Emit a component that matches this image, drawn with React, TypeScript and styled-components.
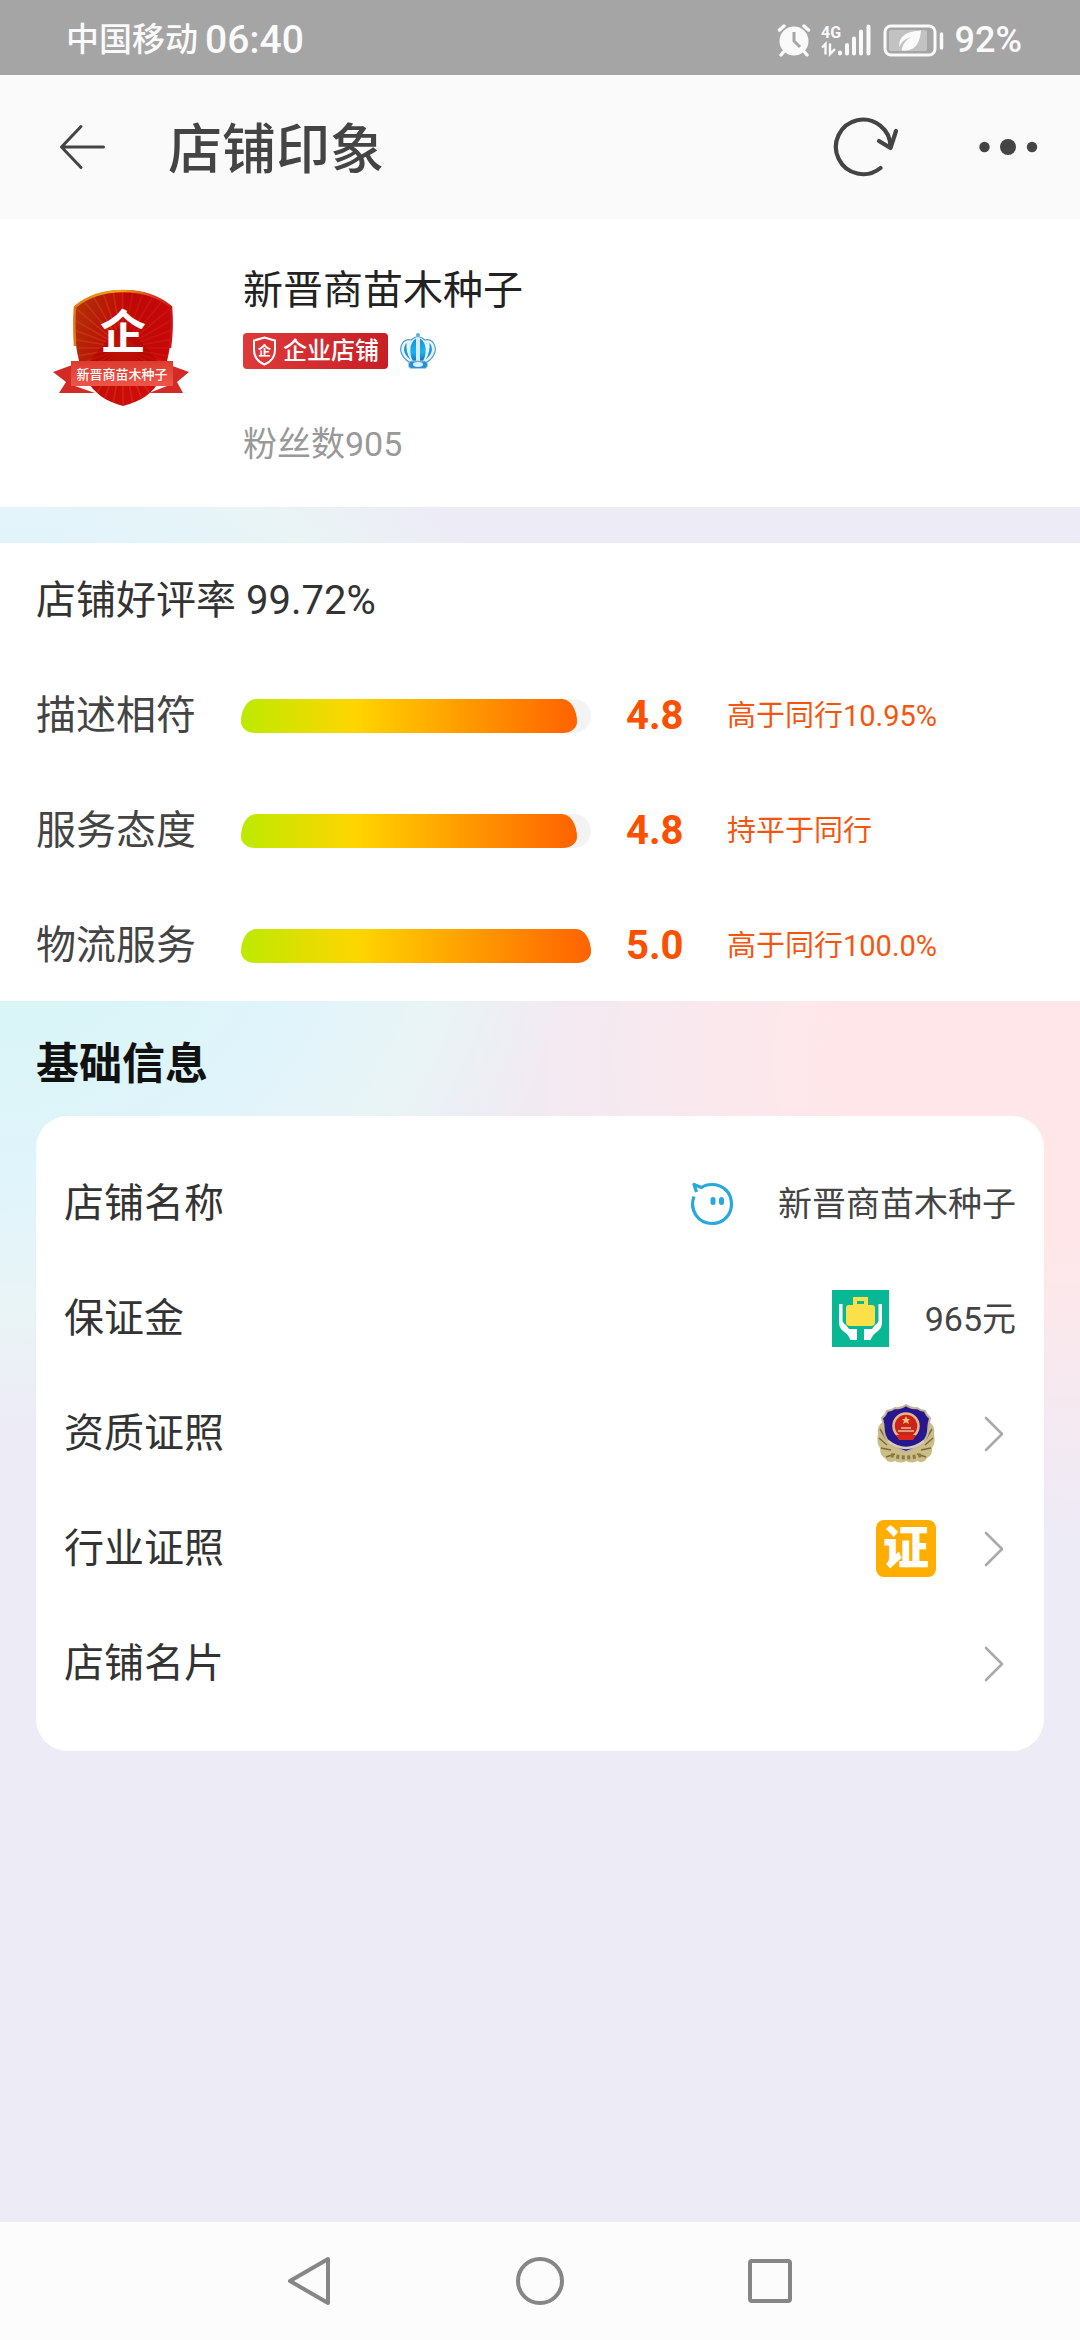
import React from 'react';
import styled, { createGlobalStyle } from 'styled-components';

const GlobalStyle = createGlobalStyle`
  *, *::before, *::after { box-sizing: border-box; }
  body {
    margin: 0;
    font-family: Roboto, "Noto Sans CJK SC", sans-serif;
    color: #333;
  }
  button {
    margin: 0;
    padding: 0;
    border: 0;
    background: none;
    font: inherit;
    color: inherit;
    text-align: left;
    cursor: pointer;
  }
  h1, h2, p { margin: 0; }
  svg { display: block; flex: none; }
`;

const Page = styled.div`
  min-height: 100vh;
  display: flex;
  flex-direction: column;
  background:
    radial-gradient(ellipse 580px 560px at 0 870px,
      #d3f6f2 0, #d9f5f6 25%, #e0f4fb 55%, #e4f4f9 66%, #e9f4f5 78%, rgba(235, 238, 245, 0) 100%),
    radial-gradient(ellipse 660px 480px at 100% 1060px,
      #ffe7e9 0, #ffe7e9 38%, rgba(255, 232, 234, 0) 100%),
    #edebf6;
`;

const StatusBar = styled.div`
  height: 75px;
  padding: 4px 58px 0 66px;
  display: flex;
  align-items: center;
  justify-content: space-between;
  background: #a5a5a5;
  color: #fafafa;
`;

const StatusGroup = styled.div<{ $gap: number }>`
  display: flex;
  align-items: center;
  gap: ${(p) => p.$gap}px;
`;

const StatusText = styled.span<{ $size: number }>`
  font-size: ${(p) => p.$size}px;
  line-height: 48px;
  font-weight: 500;
`;

const Header = styled.header`
  height: 144px;
  padding: 0 42px 0 56px;
  display: flex;
  align-items: center;
  background: #fafafa;
  color: #444;
`;

const Title = styled.h1`
  flex: 1;
  margin-left: 58px;
  padding-top: 8px;
  font-size: 54px;
  line-height: 72px;
  font-weight: 500;
`;

const HeaderActions = styled.div`
  display: flex;
  align-items: center;
  gap: 79px;
`;

const ShopCard = styled.section`
  display: flex;
  gap: 48px;
  padding: 42px 36px 38px 51px;
  background: #fff;
`;

const LogoBox = styled.div`
  padding-top: 15px;
`;

const ShopName = styled.h2`
  font-size: 40px;
  line-height: 60px;
  font-weight: 400;
  color: #222;
`;

const BadgeRow = styled.div`
  margin-top: 11px;
  display: flex;
  align-items: center;
  gap: 11px;
`;

const EnterpriseBadge = styled.span`
  height: 36px;
  padding: 0 9px;
  display: flex;
  align-items: center;
  gap: 6px;
  border-radius: 4px;
  background: linear-gradient(90deg, #df3a3a, #c81e25);
  color: #fff;
  font-size: 24px;
  line-height: 36px;
  font-weight: 500;
`;

const Fans = styled.p`
  margin-top: 49px;
  font-size: 34px;
  line-height: 50px;
  color: #999;
`;

const Scores = styled.section`
  margin-top: 36px;
  padding: 29px 36px 26px;
  display: flex;
  flex-direction: column;
  gap: 57px;
  background: #fff;
`;

const ScoreLine = styled.div`
  display: grid;
  grid-template-columns: 205px 350px 58px 1fr;
  align-items: center;
  font-size: 40px;
  line-height: 58px;
`;

const Rate = styled.p`
  font-size: 40px;
  line-height: 58px;
`;

const ScoreName = styled.span`
  color: #444;
`;

const Track = styled.div`
  height: 34px;
  border-radius: 17px;
  background: #f3f3f3;
`;

const Fill = styled.div`
  height: 100%;
  border-radius: 15px 15px 14px 14px / 23px 23px 11px 11px;
  background: linear-gradient(90deg, #bdea00 0, #ffd500 34%, #ff9c00 66%, #ff6200 100%);
`;

const ScoreValue = styled.span`
  margin-left: 35px;
  font-weight: 700;
  color: #fa5000;
`;

const ScoreNote = styled.span`
  margin-left: 78px;
  font-size: 29px;
  color: #f65510;
`;

const InfoHeading = styled.h2`
  padding: 33px 36px 22px;
  font-size: 43px;
  line-height: 60px;
  font-weight: 700;
  color: #111;
`;

const InfoCard = styled.div`
  margin: 0 36px 40px;
  padding: 30px 28px;
  border-radius: 32px;
  background: #fff;
`;

const InfoRow = styled.div`
  width: 100%;
  height: 115px;
  display: flex;
  align-items: center;
  justify-content: space-between;
  font-size: 40px;
  line-height: 58px;
`;

const InfoEnd = styled.span<{ $gap: number; $inset?: number }>`
  display: flex;
  align-items: center;
  gap: ${(p) => p.$gap}px;
  padding-right: ${(p) => p.$inset ?? 0}px;
  font-size: 34px;
  color: #444;
`;

const CertIcon = styled.span`
  width: 60px;
  height: 57px;
  display: flex;
  align-items: center;
  justify-content: center;
  border-radius: 8px;
  background: #ffae00;
  color: #fff;
  font-size: 46px;
  line-height: 57px;
  font-weight: 900;
`;

const SystemNav = styled.nav`
  height: 118px;
  margin-top: auto;
  display: flex;
  align-items: center;
  justify-content: center;
  gap: 181px;
  background: #fcfcfc;
`;

const AlarmIcon = () => (
  <svg width="34" height="34" viewBox="0 0 34 34" aria-hidden="true">
    <circle cx="17" cy="18" r="14.5" fill="#fafafa" />
    <path d="M2.5 7 L7 3 M31.5 7 L27 3 M6.5 29 L4 32 M27.5 29 L30 32" stroke="#fafafa" strokeWidth="3.4" strokeLinecap="round" />
    <path d="M17 9 V18 L23 24" stroke="#a5a5a5" strokeWidth="3" fill="none" />
  </svg>
);

const SignalIcon = () => (
  <svg width="52" height="38" viewBox="0 -2 52 38" aria-hidden="true">
    <text x="0" y="15" fontSize="16" fontWeight="700" fill="#fafafa" fontFamily="Roboto, sans-serif">4G</text>
    <path d="M1 24.5 L4.5 21 V31.5 M9 20.5 V31 L14 26" stroke="#fafafa" strokeWidth="2.4" fill="none" />
    <path d="M19 29.5 V30.5 M26 22 V30.5 M33 15.5 V30.5 M40 8.5 V30.5 M47.5 3.5 V30.5" stroke="#fafafa" strokeWidth="4" strokeLinecap="round" />
  </svg>
);

const BatteryIcon = () => (
  <svg width="62" height="34" viewBox="0 0 62 34" aria-hidden="true">
    <rect x="2" y="3" width="50" height="29" rx="6" fill="none" stroke="#fafafa" strokeWidth="3" />
    <rect x="6" y="7" width="38" height="21" rx="2" fill="#c2c2c2" />
    <path d="M38 7.5 C25 8 15 13 16.5 24 C18 19 22 16 29 13.5 C23 17 20 20 18.500 27.5 C34 29 37 18 38 7.5Z" fill="#fafafa" />
    <path d="M58.500 11 V25" stroke="#fafafa" strokeWidth="3.5" strokeLinecap="round" />
  </svg>
);

const BackIcon = () => (
  <svg width="54" height="54" viewBox="0 0 54 54" fill="none" stroke="currentColor" strokeWidth="3" strokeLinecap="round" strokeLinejoin="round" aria-hidden="true">
    <path d="M47.5 27 H5.5 M25 6.5 L5.5 27 L25 47.5" />
  </svg>
);

const RefreshIcon = () => (
  <svg width="68" height="64" viewBox="0 0 68 64" fill="none" stroke="currentColor" strokeWidth="4.2" strokeLinecap="round" strokeLinejoin="round" aria-hidden="true">
    <path d="M49.5 53 A27.3 27.3 0 1 1 59.5 32" />
    <path d="M48 26 L59.5 33 L65 16" />
  </svg>
);

const MoreIcon = () => (
  <svg width="60" height="20" viewBox="0 0 60 20" fill="currentColor" aria-hidden="true">
    <circle cx="6.5" cy="10" r="5.2" />
    <circle cx="30" cy="10" r="8" />
    <circle cx="54" cy="10" r="5.2" />
  </svg>
);

const rays = Array.from({ length: 36 }, (_, i) => {
  const a = (i / 36) * Math.PI * 2;
  return `M72 72 L${(72 + 80 * Math.cos(a)).toFixed(1)} ${(72 + 80 * Math.sin(a)).toFixed(1)}`;
}).join(' ');

const ShopLogo = () => (
  <svg width="144" height="144" viewBox="0 0 144 144" role="img" aria-label="新晋商苗木种子">
    <defs>
      <linearGradient id="shield" x1="0" y1="0" x2="1" y2="0.3">
        <stop offset="0" stopColor="#b84a0c" />
        <stop offset="0.35" stopColor="#b42008" />
        <stop offset="0.5" stopColor="#c40c08" />
        <stop offset="1" stopColor="#d40c0c" />
      </linearGradient>
      <linearGradient id="rim" x1="0" y1="0" x2="1" y2="0">
        <stop offset="0" stopColor="#e07a10" />
        <stop offset="0.45" stopColor="#f0a81c" />
        <stop offset="0.8" stopColor="#d8401c" />
        <stop offset="1" stopColor="#c81414" />
      </linearGradient>
      <linearGradient id="ribbon" x1="0" y1="0" x2="0" y2="1">
        <stop offset="0" stopColor="#dc3c30" />
        <stop offset="1" stopColor="#ee5548" />
      </linearGradient>
      <clipPath id="shieldClip">
        <path d="M24 31 C38 19 54 14 72 14 C90 14 106 19 120 31 C121 56 120 80 110 102 C102 118 90 125 72 130 C54 125 44 118 34 102 C24 80 23 56 24 31Z" />
      </clipPath>
    </defs>
    <g clipPath="url(#shieldClip)">
      <rect width="144" height="144" fill="url(#shield)" />
      <path d={rays} stroke="#e06018" strokeOpacity="0.3" strokeWidth="1.6" />
      <path d="M72 10 L124 24 V90 L72 62Z" fill="#b80008" fillOpacity="0.4" />
      <path d="M36 88 L72 46 L110 88Z" fill="#a80000" fillOpacity="0.5" />
    </g>
    <path d="M24 70 C23 52 23 42 24 31 C38 19 54 15 72 15 C90 15 106 19 120 31 C121 42 121 56 119 72" fill="none" stroke="url(#rim)" strokeWidth="2.5" />
    <text x="72" y="72" textAnchor="middle" fontSize="46" fontWeight="700" fill="#fff" fontFamily="Noto Sans CJK SC, sans-serif">企</text>
    <path d="M2 96 L24 88 V110 L44 117 L8 117 L15 106Z" fill="#d42a26" />
    <path d="M138 96 L116 88 V110 L98 117 L132 117 L126 106Z" fill="#d42a26" />
    <rect x="20" y="85" width="102" height="25" fill="url(#ribbon)" />
    <text x="71" y="103" textAnchor="middle" fontSize="13" fontWeight="500" fill="#fff" fontFamily="Noto Sans CJK SC, sans-serif">新晋商苗木种子</text>
  </svg>
);

const BadgeShield = () => (
  <svg width="25" height="30" viewBox="0 0 25 30" aria-hidden="true">
    <path d="M2 4.5 C6 3.5 9 2.5 12.5 1.5 C16 2.5 19 3.5 23 4.5 V14 C23 21.5 18.5 26 12.5 28.5 C6.5 26 2 21.5 2 14Z" fill="none" stroke="#fff" strokeWidth="2" />
    <text x="12.5" y="19" textAnchor="middle" fontSize="13" fontWeight="700" fill="#fff" fontFamily="Noto Sans CJK SC, sans-serif">企</text>
  </svg>
);

const CrownIcon = () => (
  <svg width="38" height="38" viewBox="0 0 38 38" role="img" aria-label="皇冠">
    <defs>
      <linearGradient id="crown" x1="0" y1="0" x2="0" y2="1">
        <stop offset="0" stopColor="#1a8fd8" />
        <stop offset="0.6" stopColor="#18b4f0" />
        <stop offset="1" stopColor="#1670c0" />
      </linearGradient>
    </defs>
    <path d="M10 30 C2 25 0 17 3 12 C5 8 9 7 12 8 C14 6 16 5 19 4.5 C22 5 24 6 26 8 C29 7 33 8 35 12 C38 17 36 25 28 30Z" fill="#e8f4fc" stroke="#4c9fd6" strokeWidth="1.2" />
    <path d="M9.500 26 C4 21 4 15 7.5 11 C7 17 8 22 11.5 28Z M28.5 26 C34 21 34 15 30.5 11 C31 17 30 22 26.5 28Z" fill="#1a96de" />
    <path d="M17 6.5 C10 10 10 23 14 29 H17Z M21 6.5 C28 10 28 23 24 29 H21Z" fill="url(#crown)" />
    <rect x="17" y="5" width="4" height="24" rx="2" fill="#d4ecfa" />
    <circle cx="19" cy="3" r="2" fill="#5ab0e0" />
    <rect x="9.5" y="29" width="19" height="7.5" rx="3" fill="#2c8fd4" stroke="#9ad0f0" strokeWidth="1" />
    <ellipse cx="19" cy="32.5" rx="5" ry="2.4" fill="#d8f2ff" />
  </svg>
);

const ChatIcon = () => (
  <svg width="44" height="44" viewBox="0 0 44 44" fill="none" stroke="#28a8dc" strokeWidth="3.2" strokeLinejoin="round" aria-hidden="true">
    <path d="M4 14.500 C-1 28 8 41.5 22.5 41.5 C33.5 41.5 41.5 32.5 41.5 22 C41.5 10 32.5 2.5 22 2.5 C18 2.5 14 3.5 11.5 5.5 L4 2.5 L6.5 10" />
    <rect x="20.5" y="15" width="5" height="8" rx="2.5" fill="#28a8dc" stroke="none" />
    <rect x="29" y="15" width="5" height="8" rx="2.5" fill="#28a8dc" stroke="none" />
  </svg>
);

const DepositIcon = () => (
  <svg width="57" height="57" viewBox="0 0 57 57" aria-hidden="true">
    <rect width="57" height="57" fill="#08b894" />
    <path d="M21 15 V7 H36 V15 H40 Q43 15 43 18 V32 Q43 36 39 36 H18 Q14 36 14 32 V18 Q14 15 17 15Z M25 11 V14 H32 V11Z" fill="#fbe04a" fillRule="evenodd" />
    <path d="M7 14 H10.5 V30 Q10.5 33 14 35 L17 39 H25 V50 H18.5 Q16 44 11 41 Q7 38 7 32Z" fill="#fff" />
    <path d="M50 14 H46.5 V30 Q46.5 33 43 35 L40 39 H32 V50 H38.5 Q41 44 46 41 Q50 38 50 32Z" fill="#fff" />
  </svg>
);

const EmblemIcon = () => (
  <svg width="60" height="60" viewBox="0 0 60 60" aria-hidden="true">
    <path d="M8 17 Q0 22 2 30 Q0 38 4 44 Q4 52 9 54 Q12 60 19 57 Q25 60 30 57 Q36 60 41 57 Q48 60 51 54 Q57 51 56 44 Q60 38 58 30 Q60 22 52 17Z" fill="#cbbd88" />
    <path d="M4 25 L10 35 M3 34 L11 41 M5 44 L15 46 M10 53 L19 50 M56 25 L50 35 M57 34 L49 41 M55 44 L45 46 M50 53 L41 50" stroke="#7d6c3a" strokeWidth="1.5" />
    <path d="M15 51 Q30 56 45 51" fill="none" stroke="#8c7a42" strokeWidth="4" strokeDasharray="3 2.5" />
    <path d="M30 1 Q35 5 41 4 Q45 7 49 7 Q50 11 54 14 Q52 20 52 28 Q50 41 30 48 Q10 41 8 28 Q8 20 6 14 Q10 11 11 7 Q15 7 19 4 Q25 5 30 1Z" fill="#28168c" stroke="#c3b49c" strokeWidth="2" />
    <circle cx="30" cy="22" r="12.5" fill="#cc2418" stroke="#e4b890" strokeWidth="2.500" />
    <path d="M30 12 L31.3 15 H34 L32 17 L33 20 L30 18.3 L27 20 L28 17 L26 15 H28.7Z" fill="#f4c470" />
    <path d="M22 27 H38 M25 24 H35" stroke="#d89a78" strokeWidth="2" />
    <path d="M20 31 H40 L37 36 H23Z" fill="#d8281c" />
    <path d="M12 37 Q21 44 30 44 Q39 44 48 37" fill="none" stroke="#d8cdb8" strokeWidth="2.5" />
  </svg>
);

const Chevron = () => (
  <svg width="20" height="36" viewBox="0 0 20 36" fill="none" stroke="#aaa" strokeWidth="2.6" strokeLinecap="round" strokeLinejoin="round" aria-hidden="true">
    <path d="M2 2 L18 18 L2 34" />
  </svg>
);

const scores = [
  { name: '描述相符', value: 4.8, note: '高于同行10.95%' },
  { name: '服务态度', value: 4.8, note: '持平于同行' },
  { name: '物流服务', value: 5.0, note: '高于同行100.0%' },
];

const links = [
  { label: '资质证照', icon: <EmblemIcon /> },
  { label: '行业证照', icon: <CertIcon>证</CertIcon> },
  { label: '店铺名片', icon: null },
];

export default function App() {
  return (
    <Page>
      <GlobalStyle />
      <StatusBar>
        <StatusGroup $gap={7}>
          <StatusText $size={33}>中国移动</StatusText>
          <StatusText $size={39}>06:40</StatusText>
        </StatusGroup>
        <StatusGroup $gap={10}>
          <AlarmIcon />
          <SignalIcon />
          <BatteryIcon />
          <StatusText $size={36}>92%</StatusText>
        </StatusGroup>
      </StatusBar>

      <Header>
        <button type="button" aria-label="返回"><BackIcon /></button>
        <Title>店铺印象</Title>
        <HeaderActions>
          <button type="button" aria-label="刷新"><RefreshIcon /></button>
          <button type="button" aria-label="更多"><MoreIcon /></button>
        </HeaderActions>
      </Header>

      <main>
        <ShopCard>
          <LogoBox><ShopLogo /></LogoBox>
          <div>
            <ShopName>新晋商苗木种子</ShopName>
            <BadgeRow>
              <EnterpriseBadge><BadgeShield />企业店铺</EnterpriseBadge>
              <CrownIcon />
            </BadgeRow>
            <Fans>粉丝数905</Fans>
          </div>
        </ShopCard>

        <Scores>
          <Rate>店铺好评率 99.72%</Rate>
          {scores.map((s) => (
            <ScoreLine key={s.name}>
              <ScoreName>{s.name}</ScoreName>
              <Track role="meter" aria-label={s.name} aria-valuemin={0} aria-valuemax={5} aria-valuenow={s.value}>
                <Fill style={{ width: `${(s.value / 5) * 100}%` }} />
              </Track>
              <ScoreValue>{s.value.toFixed(1)}</ScoreValue>
              <ScoreNote>{s.note}</ScoreNote>
            </ScoreLine>
          ))}
        </Scores>

        <InfoHeading>基础信息</InfoHeading>
        <InfoCard>
          <InfoRow>
            <span>店铺名称</span>
            <InfoEnd $gap={44}><button type="button" aria-label="联系卖家"><ChatIcon /></button>新晋商苗木种子</InfoEnd>
          </InfoRow>
          <InfoRow>
            <span>保证金</span>
            <InfoEnd $gap={36}><DepositIcon />965元</InfoEnd>
          </InfoRow>
          {links.map((l) => (
            <InfoRow as="button" type="button" key={l.label}>
              <span>{l.label}</span>
              <InfoEnd $gap={48} $inset={12}>{l.icon}<Chevron /></InfoEnd>
            </InfoRow>
          ))}
        </InfoCard>
      </main>

      <SystemNav>
        <button type="button" aria-label="后退">
          <svg width="50" height="50" viewBox="0 0 50 50" fill="none" stroke="#868686" strokeWidth="4" strokeLinejoin="round"><path d="M44 3 V47 L6 25Z" /></svg>
        </button>
        <button type="button" aria-label="主屏幕">
          <svg width="50" height="50" viewBox="0 0 50 50" fill="none" stroke="#868686" strokeWidth="4"><circle cx="25" cy="25" r="22" /></svg>
        </button>
        <button type="button" aria-label="最近任务">
          <svg width="50" height="50" viewBox="0 0 50 50" fill="none" stroke="#868686" strokeWidth="4"><rect x="4" y="5" width="40" height="40" rx="2" /></svg>
        </button>
      </SystemNav>
    </Page>
  );
}
